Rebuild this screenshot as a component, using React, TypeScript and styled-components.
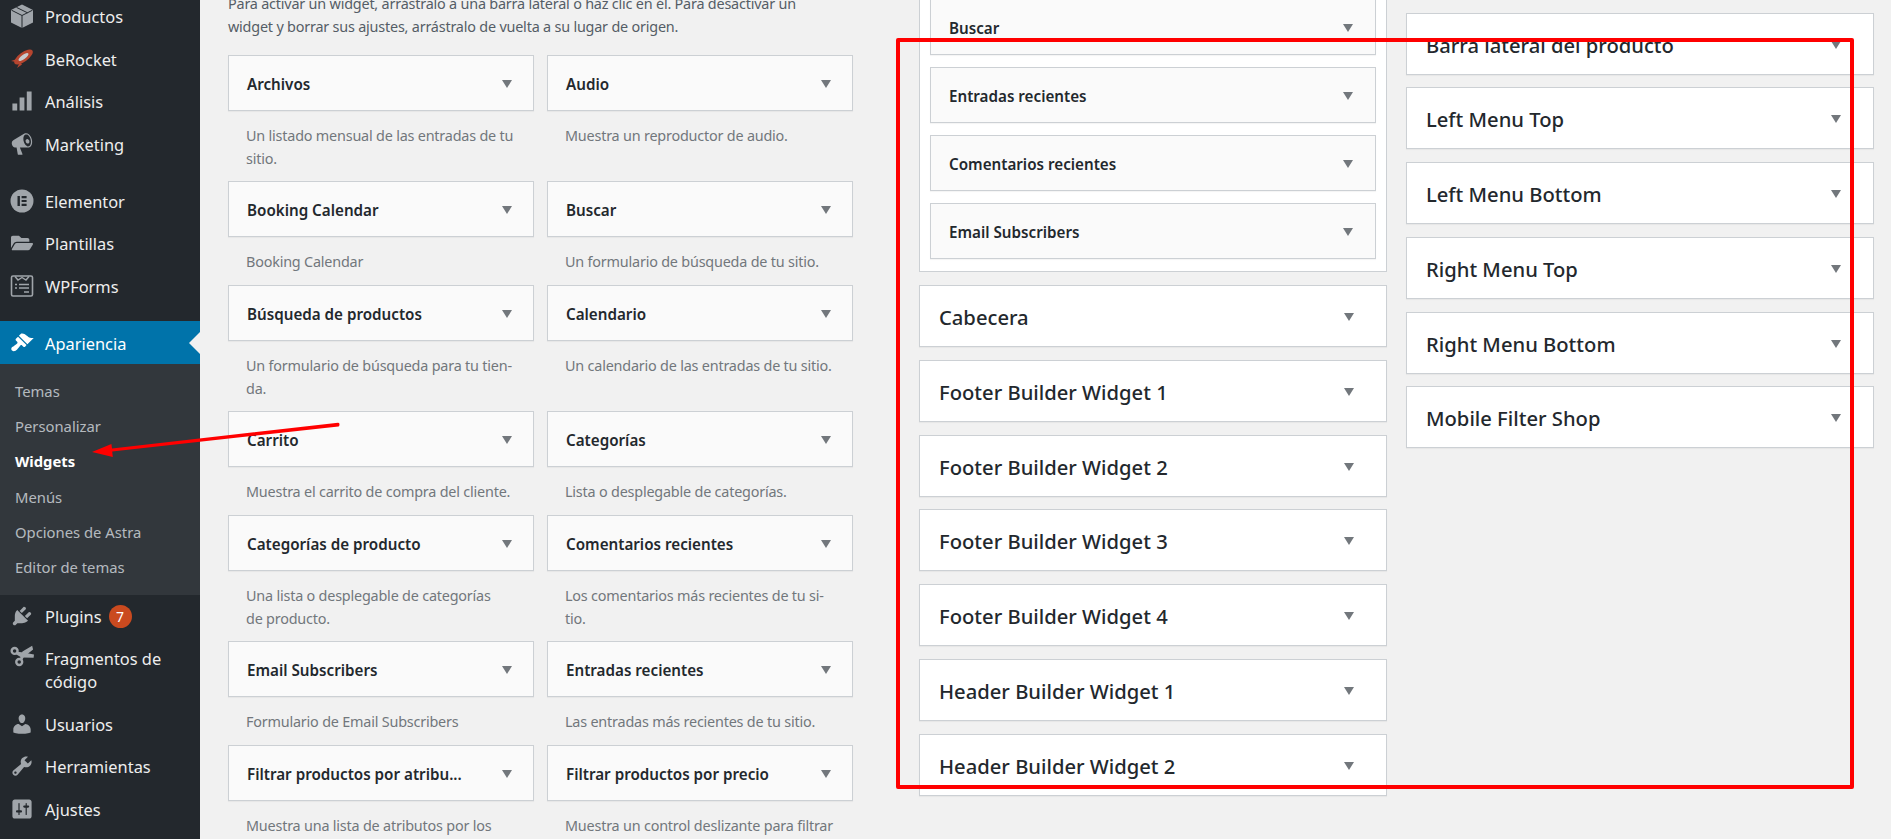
import React from "react";
import styled, { createGlobalStyle } from "styled-components";
import { FaFolderOpen } from "react-icons/fa";

const GlobalStyle = createGlobalStyle`
  html, body { margin: 0; padding: 0; background: #f1f1f1; }
  body { font-family: "Noto Sans", "Open Sans", sans-serif; overflow: hidden; }
`;

const iconPaths: Record<string, string> = {
  chart: "M18 18V2h-4v16h4zm-6 0V7H8v11h4zm-6 0v-6H2v6h4z",
  megaphone:
    "M18.15 5.94c.46 1.62.38 3.22-.02 4.48-.42 1.28-1.26 2.18-2.3 2.48-.16.06-.26.06-.4.06-.06.02-.12.02-.18.02-.06.02-.14.02-.22.02h-6.8l2.22 5.5c.02.14-.06.26-.14.34-.08.1-.24.16-.34.16H6.95c-.1 0-.26-.06-.34-.16-.08-.08-.16-.2-.14-.34l-1-5.5H4.25l-.02-.02c-.5.06-1.08-.18-1.54-.62s-.88-1.08-1.06-1.88c-.24-.8-.2-1.56-.02-2.2.18-.62.58-1.08 1.06-1.3l.02-.02 9-5.4c.1-.06.18-.1.24-.16.06-.04.14-.08.24-.12.16-.08.28-.12.5-.18 1.04-.3 2.24.1 3.22 1 .98.88 1.8 2.24 2.26 3.86zm-2.58 5.98c.4-.1.74-.34 1.04-.7.58-.7.86-1.76.86-3.04-.02-.64-.1-1.3-.28-1.98-.34-1.36-1.02-2.5-1.78-3.24-.38-.38-.8-.66-1.2-.8-.4-.16-.8-.18-1.18-.08-.38.1-.7.34-1 .7-.6.7-.88 1.76-.88 3.04 0 .64.08 1.3.26 1.98.34 1.34 1.02 2.5 1.78 3.24.4.38.8.66 1.2.8.4.16.8.18 1.18.08zm-1.1-2.28c-.72-.2-1.3-1.16-1.5-2.2-.1-.5.7-1.8 1.9-1.5 1 .3 1.4 1.3 1.3 2.3-.1.9-.9 1.6-1.7 1.4z",
  brush:
    "M14.48 11.06L7.41 3.99l1.5-1.5c.5-.56 2.3-.47 3.51.32 1.21.8 1.43 1.28 2.91 2.1 1.18.64 2.45 1.26 4.45.85zm-.71.71L6.7 4.7 4.93 6.47c-.39.39-.39 1.02 0 1.41l1.06 1.06c.39.39.39 1.03 0 1.42-.6.6-1.43 1.11-2.21 1.69-.35.26-.7.53-1.01.84C1.43 13.23.4 14.98 1.72 16.3c1.33 1.33 3.08.3 4.42-1.03.31-.31.58-.66.84-1.01.58-.78 1.09-1.61 1.69-2.21.39-.39 1.03-.39 1.42 0l1.06 1.06c.39.39 1.02.39 1.41 0z",
  plug:
    "M13.11 4.36L9.87 7.6 8 5.73l3.24-3.24c.35-.34 1.05-.2 1.56.32.52.51.66 1.21.31 1.55zm-8 1.77l.91-1.12 9.01 9.01-1.19.84c-.71.71-2.63 1.16-3.82 1.16H6.14L4.9 17.26c-.59.59-1.54.59-2.12 0-.59-.58-.59-1.53 0-2.12l1.24-1.24v-3.88c0-1.13.4-3.19 1.09-3.89zm7.26 3.97l3.24-3.24c.34-.35 1.04-.21 1.55.31.52.51.66 1.21.31 1.55l-3.24 3.25z",
  user:
    "M10 9.25c-2.27 0-2.73-3.44-2.73-3.44C7 4.02 7.82 2 9.97 2c2.16 0 2.98 2.02 2.71 3.81 0 0-.41 3.44-2.68 3.44zm0 2.57L12.72 10c2.39 0 4.52 2.33 4.52 4.53v2.49s-3.65 1.13-7.24 1.13c-3.65 0-7.24-1.13-7.24-1.13v-2.49c0-2.25 1.94-4.48 4.47-4.48z",
  wrench:
    "M16.68 9.77c-1.34 1.34-3.3 1.67-4.95.99l-5.41 6.52c-.99.99-2.59.99-3.58 0s-.99-2.59 0-3.57l6.52-5.42c-.68-1.65-.35-3.61.99-4.95 1.28-1.28 3.12-1.62 4.72-1.06l-2.89 2.89 2.82 2.82 2.86-2.87c.53 1.58.18 3.39-1.08 4.65zM3.81 16.21c.4.39 1.04.39 1.43 0 .4-.4.4-1.04 0-1.43-.39-.4-1.03-.4-1.43 0-.39.39-.39 1.03 0 1.43z",
  sliders:
    "M18 16V4c0-1.1-.9-2-2-2H4c-1.1 0-2 .9-2 2v12c0 1.1.9 2 2 2h12c1.1 0 2-.9 2-2zM8 11h1c.55 0 1 .45 1 1s-.45 1-1 1H8v1.5c0 .28-.22.5-.5.5s-.5-.22-.5-.5V13H6c-.55 0-1-.45-1-1s.45-1 1-1h1V5.5c0-.28.22-.5.5-.5s.5.22.5.5V11zm5-2h-1c-.55 0-1-.45-1-1s.45-1 1-1h1V5.5c0-.28.22-.5.5-.5s.5.22.5.5V7h1c.55 0 1 .45 1 1s-.45 1-1 1h-1v5.5c0 .28-.22.5-.5.5s-.5-.22-.5-.5V9z",
};

const DashIcon = ({ name }: { name: string }) => (
  <svg width="24" height="24" viewBox="0 0 20 20" fill="currentColor">
    <path d={iconPaths[name]} />
  </svg>
);

const BoxIcon = () => (
  <svg width="24" height="24" viewBox="0 0 24 24">
    <path d="M12 .5 23 6v12.5L12 24 1 18.5V6z" fill="currentColor" />
    <path d="M1.5 6.2 12 11.5l10.5-5.3M12 11.5V24M6.5 3.4l11 5.4" stroke="#23282d" strokeWidth="1" fill="none" />
  </svg>
);

const RocketIcon = () => (
  <svg width="24" height="24" viewBox="0 0 24 24">
    <path d="M7 12 1 14l5 1zM10 15l-3 6 5-3.5z" fill="#b5452f" />
    <ellipse cx="13.5" cy="10" rx="11" ry="4.6" transform="rotate(-36 13.5 10)" fill="#b5452f" />
    <ellipse cx="13.5" cy="10" rx="6" ry="2.1" transform="rotate(-36 13.5 10)" fill="#c6cace" />
  </svg>
);

const ElementorIcon = () => (
  <svg width="24" height="24" viewBox="0 0 24 24">
    <circle cx="12" cy="12" r="11.5" fill="currentColor" />
    <path d="M7.5 7h2.4v10H7.5zM11.6 7h5v2.2h-5zM11.6 10.9h5v2.2h-5zM11.6 14.8h5V17h-5z" fill="#23282d" />
  </svg>
);

const FormsIcon = () => (
  <svg width="24" height="24" viewBox="0 0 24 24" fill="none" stroke="currentColor">
    <rect x="1.5" y="2" width="21" height="20" rx="1.5" strokeWidth="1.6" />
    <path d="M5 2.5l3 3.5 4-2.5 4 2.5 3-3.5" strokeWidth="1.4" />
    <path d="M5 10.5h2M9 10.5h10M5 14h2M9 14h10M14 18h5" strokeWidth="1.6" />
  </svg>
);

const ScissorsIcon = () => (
  <svg width="26" height="24" viewBox="0 0 26 24" fill="none" stroke="currentColor">
    <circle cx="5" cy="6.5" r="3.2" strokeWidth="2.6" />
    <circle cx="10" cy="18.5" r="3.2" strokeWidth="2.6" />
    <path d="M7 7.5 13 8l13 2.5-.4 3.5-13.2-.4L6.5 10z" fill="currentColor" stroke="none" />
    <path d="M10.5 15.5 13.5 7 24 1l1 4-10 8-2 4z" fill="currentColor" stroke="none" />
  </svg>
);

type MenuEntry = { label: string; icon: React.ReactNode; gapBefore?: boolean; tall?: boolean; badge?: string };

const topMenu: MenuEntry[] = [
  { label: "Productos", icon: <BoxIcon /> },
  { label: "BeRocket", icon: <RocketIcon /> },
  { label: "Análisis", icon: <DashIcon name="chart" /> },
  { label: "Marketing", icon: <DashIcon name="megaphone" /> },
  { label: "Elementor", icon: <ElementorIcon />, gapBefore: true },
  { label: "Plantillas", icon: <FaFolderOpen size={22} /> },
  { label: "WPForms", icon: <FormsIcon /> },
];

const bottomMenu: MenuEntry[] = [
  { label: "Plugins", icon: <DashIcon name="plug" />, badge: "7" },
  { label: "Fragmentos de código", icon: <ScissorsIcon />, tall: true },
  { label: "Usuarios", icon: <DashIcon name="user" /> },
  { label: "Herramientas", icon: <DashIcon name="wrench" /> },
  { label: "Ajustes", icon: <DashIcon name="sliders" /> },
];

const subMenu = ["Temas", "Personalizar", "Widgets", "Menús", "Opciones de Astra", "Editor de temas"];

const available: [string, string][] = [
  ["Archivos", "Un listado mensual de las entradas de tu\nsitio."],
  ["Audio", "Muestra un reproductor de audio."],
  ["Booking Calendar", "Booking Calendar"],
  ["Buscar", "Un formulario de búsqueda de tu sitio."],
  ["Búsqueda de productos", "Un formulario de búsqueda para tu tien-\nda."],
  ["Calendario", "Un calendario de las entradas de tu sitio."],
  ["Carrito", "Muestra el carrito de compra del cliente."],
  ["Categorías", "Lista o desplegable de categorías."],
  ["Categorías de producto", "Una lista o desplegable de categorías\nde producto."],
  ["Comentarios recientes", "Los comentarios más recientes de tu si-\ntio."],
  ["Email Subscribers", "Formulario de Email Subscribers"],
  ["Entradas recientes", "Las entradas más recientes de tu sitio."],
  ["Filtrar productos por atribu...", "Muestra una lista de atributos por los"],
  ["Filtrar productos por precio", "Muestra un control deslizante para filtrar"],
];

const nestedWidgets = ["Buscar", "Entradas recientes", "Comentarios recientes", "Email Subscribers"];
const middleAreas = [
  "Cabecera",
  "Footer Builder Widget 1",
  "Footer Builder Widget 2",
  "Footer Builder Widget 3",
  "Footer Builder Widget 4",
  "Header Builder Widget 1",
  "Header Builder Widget 2",
];
const rightAreas = [
  "Barra lateral del producto",
  "Left Menu Top",
  "Left Menu Bottom",
  "Right Menu Top",
  "Right Menu Bottom",
  "Mobile Filter Shop",
];

const App = () => {
  const renderMenu = (items: MenuEntry[]) =>
    items.map((item) => (
      <MenuItem key={item.label} $gap={item.gapBefore}>
        <MenuIcon $tall={item.tall}>{item.icon}</MenuIcon>
        <MenuLabel>{item.label}</MenuLabel>
        {item.badge && <Badge>{item.badge}</Badge>}
      </MenuItem>
    ));

  return (
    <Page>
      <GlobalStyle />
      <Sidebar>
        {renderMenu(topMenu)}
        <ActiveItem>
          <MenuIcon>
            <DashIcon name="brush" />
          </MenuIcon>
          <MenuLabel>Apariencia</MenuLabel>
        </ActiveItem>
        <SubMenu>
          {subMenu.map((label) => (
            <SubItem key={label} $current={label === "Widgets"}>
              {label}
            </SubItem>
          ))}
        </SubMenu>
        {renderMenu(bottomMenu)}
      </Sidebar>

      <Content>
        <AvailableColumn>
          <Intro>
            Para activar un widget, arrástralo a una barra lateral o haz clic en él. Para desactivar un widget y borrar
            sus ajustes, arrástralo de vuelta a su lugar de origen.
          </Intro>
          <WidgetGrid>
            {available.map(([title, text]) => (
              <div key={title}>
                <WidgetCard>
                  <WidgetTitle>{title}</WidgetTitle>
                  <Caret />
                </WidgetCard>
                <WidgetDesc>{text}</WidgetDesc>
              </div>
            ))}
          </WidgetGrid>
        </AvailableColumn>

        <MiddleColumn>
          <OpenArea>
            {nestedWidgets.map((title) => (
              <NestedCard key={title}>
                <WidgetTitle>{title}</WidgetTitle>
                <Caret />
              </NestedCard>
            ))}
          </OpenArea>
          {middleAreas.map((title) => (
            <AreaCard key={title}>
              <AreaTitle>{title}</AreaTitle>
              <Caret />
            </AreaCard>
          ))}
        </MiddleColumn>

        <RightColumn>
          {rightAreas.map((title) => (
            <AreaCard key={title}>
              <AreaTitle>{title}</AreaTitle>
              <Caret />
            </AreaCard>
          ))}
        </RightColumn>
      </Content>

      <RedFrame />
      <RedArrow viewBox="0 0 260 40" width="260" height="40">
        <path d="M248 1.7 22 27.5l-.6-4.5L2 31l20.8 5-.6-5.4L248.5 5.4c1.2-.2 1.6-3.9-.5-3.7z" fill="#f00" />
      </RedArrow>
    </Page>
  );
};

const Page = styled.div`
  position: relative;
  width: 1891px;
  height: 839px;
  overflow: hidden;
  display: flex;
  background: #f1f1f1;
`;

const Sidebar = styled.nav`
  width: 200px;
  flex: none;
  height: 845px;
  margin-top: -4.5px;
  background: #23282d;
  color: #eee;
  overflow: hidden;
`;

const MenuItem = styled.div<{ $gap?: boolean }>`
  display: flex;
  align-items: flex-start;
  padding: 9.75px 8px 9.75px 10px;
  margin-top: ${(p) => (p.$gap ? "14.5px" : "0")};
  font-size: 16.4px;
  line-height: 23px;
`;

const ActiveItem = styled(MenuItem)`
  position: relative;
  margin-top: 13.5px;
  padding-top: 10.5px;
  padding-bottom: 9.5px;
  background: #0073aa;
  color: #fff;
  svg {
    color: #fff;
  }
  &::after {
    content: "";
    position: absolute;
    right: 0;
    top: 50%;
    margin-top: -11px;
    border: 11px solid transparent;
    border-left-width: 0;
    border-right-color: #f1f1f1;
  }
`;

const MenuIcon = styled.span<{ $tall?: boolean }>`
  flex: none;
  width: 24px;
  height: 24px;
  margin-right: 11px;
  display: flex;
  align-items: center;
  justify-content: center;
  color: #a0a5aa;
  margin-top: ${(p) => (p.$tall ? "-3px" : "-1px")};
`;

const MenuLabel = styled.span`
  white-space: normal;
`;

const Badge = styled.span`
  width: 23px;
  height: 23px;
  margin-left: 7px;
  border-radius: 50%;
  background: #ca4a1f;
  color: #fff;
  font-size: 14px;
  line-height: 23px;
  text-align: center;
`;

const SubMenu = styled.div`
  background: #32373c;
  padding: 10px 0 10px;
`;

const SubItem = styled.div<{ $current?: boolean }>`
  height: 35.2px;
  line-height: 35.2px;
  padding-left: 15px;
  font-size: 14.8px;
  font-weight: ${(p) => (p.$current ? 700 : 400)};
  color: ${(p) => (p.$current ? "#fff" : "rgba(240, 245, 250, 0.7)")};
`;

const Content = styled.main`
  flex: 1;
  display: flex;
  align-items: flex-start;
  padding-left: 28px;
`;

const AvailableColumn = styled.section`
  width: 625px;
  flex: none;
  margin-top: -8.5px;
  margin-right: 66px;
`;

const Intro = styled.p`
  margin: 0 0 17.3px;
  max-width: 605px;
  font-size: 14.4px;
  letter-spacing: -0.2px;
  line-height: 23px;
  color: #555d66;
`;

const WidgetGrid = styled.div`
  display: grid;
  grid-template-columns: 306px 306px;
  column-gap: 13px;
`;

const WidgetCard = styled.div`
  display: flex;
  align-items: center;
  justify-content: space-between;
  box-sizing: border-box;
  height: 56px;
  padding: 0 21px 0 18px;
  background: #fafafa;
  border: 1px solid #ccd0d4;
  box-shadow: 0 1px 1px rgba(0, 0, 0, 0.04);
`;

const WidgetTitle = styled.span`
  padding-top: 2px;
  font-size: 15.2px;
  font-weight: 600;
  color: #23282d;
  white-space: nowrap;
`;

const WidgetDesc = styled.p`
  margin: 13px 0 11.5px;
  padding-left: 18px;
  font-size: 14.4px;
  letter-spacing: -0.2px;
  line-height: 23px;
  color: #72777c;
  white-space: pre-line;
`;

const Caret = styled.i`
  flex: none;
  width: 0;
  height: 0;
  margin-top: 2px;
  border-left: 5px solid transparent;
  border-right: 5px solid transparent;
  border-top: 8px solid #72777c;
`;

const MiddleColumn = styled.section`
  width: 468px;
  flex: none;
  margin-right: 19px;
`;

const OpenArea = styled.div`
  box-sizing: border-box;
  margin: -12px 0 12.8px;
  padding: 10px 10px 12.5px;
  display: flex;
  flex-direction: column;
  gap: 12.6px;
  background: #fff;
  border: 1px solid #ccd0d4;
`;

const NestedCard = styled(WidgetCard)`
  height: 55.5px;
  padding-right: 22px;
`;

const AreaCard = styled.div`
  display: flex;
  align-items: center;
  justify-content: space-between;
  box-sizing: border-box;
  height: 62px;
  margin-bottom: 12.8px;
  padding: 0 32px 0 19px;
  background: #fff;
  border: 1px solid #ccd0d4;
  box-shadow: 0 1px 1px rgba(0, 0, 0, 0.04);
`;

const AreaTitle = styled.h3`
  margin: 0;
  padding-top: 2px;
  font-size: 20.2px;
  font-weight: 500;
  color: #23282d;
`;

const RightColumn = styled.section`
  width: 468px;
  flex: none;
  padding-top: 12.5px;
`;

const RedFrame = styled.div`
  position: absolute;
  left: 896px;
  top: 38px;
  width: 958px;
  height: 751px;
  box-sizing: border-box;
  border: 4px solid #f00;
  border-radius: 2px;
  pointer-events: none;
`;

const RedArrow = styled.svg`
  position: absolute;
  left: 90px;
  top: 421px;
  overflow: visible;
`;

export default App;
